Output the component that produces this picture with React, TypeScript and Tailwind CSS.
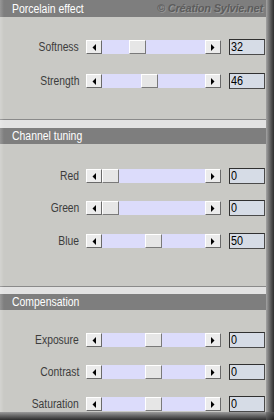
import React from "react";

const font = { fontFamily: '"Liberation Sans", Arial, sans-serif' };

function Arrow({ dir }: { dir: "left" | "right" }) {
  return (
    <div className="w-[16px] h-[14px] shrink-0 bg-[#ececec] border-t border-l border-t-white border-l-white border-b border-r border-b-[#6a6a6a] border-r-[#6a6a6a] flex items-center justify-center">
      <svg width="4" height="7" viewBox="0 0 4 7">
        {dir === "left" ? (
          <polygon points="4,0 4,7 0.5,3.5" fill="#000" />
        ) : (
          <polygon points="0,0 0,7 3.5,3.5" fill="#000" />
        )}
      </svg>
    </div>
  );
}

function Row({ label, value, frac }: { label: string; value: string; frac: number }) {
  return (
    <div className="flex items-center h-[16px]">
      <div className="w-[79px] flex justify-end">
        <span className="inline-block whitespace-nowrap origin-right scale-x-[0.86] text-[12px] leading-none text-[#3c3c3c]">
          {label}
        </span>
      </div>
      <div className="ml-[7px] w-[135px] h-[14px] flex bg-[#dcdcfb]">
        <Arrow dir="left" />
        <div className="flex-1 flex">
          <div style={{ width: Math.round(frac * 85) }} />
          <div className="w-[17px] h-[14px] bg-[#e6e6e6] border-t border-l border-t-white border-l-white border-b border-r border-b-[#7a7a7a] border-r-[#7a7a7a]" />
        </div>
        <Arrow dir="right" />
      </div>
      <div className="ml-[8px] w-[36px] h-[16px] bg-[#d6dce6] border border-[#4a4a4a] border-t-[#303030] border-l-[#303030] flex items-center pl-[1px]">
        <span className="inline-block origin-left scale-x-[0.9] text-[12px] leading-none text-black">{value}</span>
      </div>
    </div>
  );
}

function Header({ title, h, extra }: { title: string; h: string; extra?: React.ReactNode }) {
  return (
    <div className={`${h} bg-[#7e7e7e] flex items-center justify-between pl-[12px] pr-[3px]`}>
      <span className="inline-block whitespace-nowrap origin-left scale-x-[0.87] text-[12px] leading-none text-white">
        {title}
      </span>
      {extra}
    </div>
  );
}

function Separator({ band }: { band: string }) {
  return (
    <>
      <div className="h-[1px] bg-[#8a8a8a]" />
      <div className={`${band} bg-[#e2e2e2]`} />
    </>
  );
}

export default function App() {
  return (
    <div className="w-[274px] h-[420px] flex flex-col bg-[#c9c9c5] overflow-hidden" style={font}>
      <div className="flex h-[412px]">
        <div className="relative w-[266px] h-[412px] flex flex-col overflow-hidden">
          <Header
            title="Porcelain effect"
            h="h-[17px]"
            extra={
              <span className="text-[11px] font-bold italic leading-none text-[#5c5c5c] whitespace-nowrap tracking-[-0.2px] [text-shadow:1px_1px_0_#9a9a9a]">
                © Création Sylvie.net
              </span>
            }
          />
          <div className="h-[102px] pt-[22px] flex flex-col">
            <Row label="Softness" value="32" frac={0.32} />
            <div className="h-[18px]" />
            <Row label="Strength" value="46" frac={0.46} />
          </div>
          <Separator band="h-[8px]" />
          <Header title="Channel tuning" h="h-[16px]" />
          <div className="h-[142px] pt-[24px] flex flex-col">
            <Row label="Red" value="0" frac={0} />
            <div className="h-[16px]" />
            <Row label="Green" value="0" frac={0} />
            <div className="h-[17px]" />
            <Row label="Blue" value="50" frac={0.5} />
          </div>
          <Separator band="h-[7px]" />
          <Header title="Compensation" h="h-[16px]" />
          <div className="h-[102px] pt-[22px] flex flex-col">
            <Row label="Exposure" value="0" frac={0.5} />
            <div className="h-[16px]" />
            <Row label="Contrast" value="0" frac={0.5} />
            <div className="h-[16px]" />
            <Row label="Saturation" value="0" frac={0.5} />
          </div>
          <div className="absolute left-0 top-0 bottom-0 w-[4px] bg-gradient-to-r from-white/20 to-transparent" />
        </div>
        <div className="w-[8px] h-[412px] bg-gradient-to-r from-[#a4a4a4] to-[#2e2e2e]" />
      </div>
      <div className="h-[8px] flex">
        <div className="flex-1 bg-gradient-to-b from-[#9c9c9c] to-[#2e2e2e]" />
        <div className="w-[8px] bg-gradient-to-br from-[#7a7a7a] to-[#202020]" />
      </div>
    </div>
  );
}
